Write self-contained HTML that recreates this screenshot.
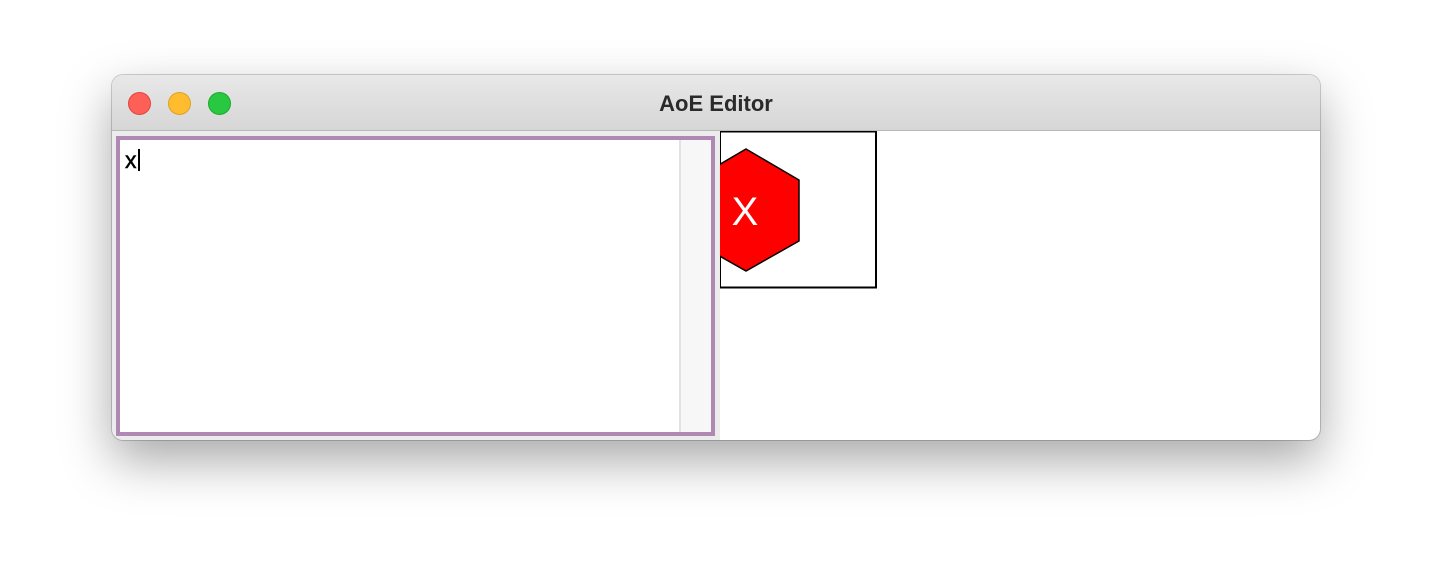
<!DOCTYPE html>
<html><head><style>
body{margin:0;width:1432px;height:588px;background:#fff;position:relative;overflow:hidden;font-family:"Liberation Sans",sans-serif}
.win{position:absolute;left:112px;top:75px;width:1208px;height:365px;border-radius:11px;overflow:hidden;background:#fff;box-shadow:0 20px 50px rgba(0,0,0,.35),0 0 0 1px rgba(0,0,0,.18)}
.tb{position:absolute;left:0;top:0;width:100%;height:55px;background:linear-gradient(#e8e8e8,#d6d6d6);border-bottom:1px solid #b8b8b8}
.dot{position:absolute;top:17px;width:23px;height:23px;border-radius:50%;box-sizing:border-box}
.title{position:absolute;top:16px;width:100%;text-align:center;font-weight:bold;font-size:22px;color:#2a2a2a}
.left{position:absolute;left:0;top:56px;width:608px;height:309px;background:#ececec}
.ta{position:absolute;left:4px;top:5px;width:591px;height:292px;border:4px solid #b088b4;background:#fff}
.sb{position:absolute;right:0;top:0;width:30px;height:100%;background:#f7f7f7;border-left:2px solid #e2e2e2}
</style></head><body>
<div class="win">
<div class="tb">
<div class="dot" style="left:16px;background:#fe5f57;border:1px solid #e0443e"></div>
<div class="dot" style="left:56px;background:#febc2e;border:1px solid #dea123"></div>
<div class="dot" style="left:96px;background:#28c840;border:1px solid #1aab29"></div>
<div class="title">AoE Editor</div>
</div>
<div class="left"><div class="ta">
<div style="position:absolute;left:5px;top:9px;font-size:23px;color:#000;line-height:22px;-webkit-text-stroke:0.5px #000">x<span style="display:inline-block;width:2px;height:22px;background:#000;vertical-align:top;margin-left:1px"></span></div>
<div class="sb"></div></div></div>
<svg style="position:absolute;left:608px;top:56px" width="600" height="309">
<rect x="0" y="0.5" width="156" height="156" fill="#fff" stroke="#000" stroke-width="2"/>
<polygon points="26,18 79,49 79,110 26,140 -27,110 -27,49" fill="#ff0000" stroke="#000" stroke-width="1.5"/>
<text x="25" y="94" fill="#fff" font-family="Liberation Sans,sans-serif" font-size="40" text-anchor="middle">X</text>
</svg>
</div>
</body></html>
